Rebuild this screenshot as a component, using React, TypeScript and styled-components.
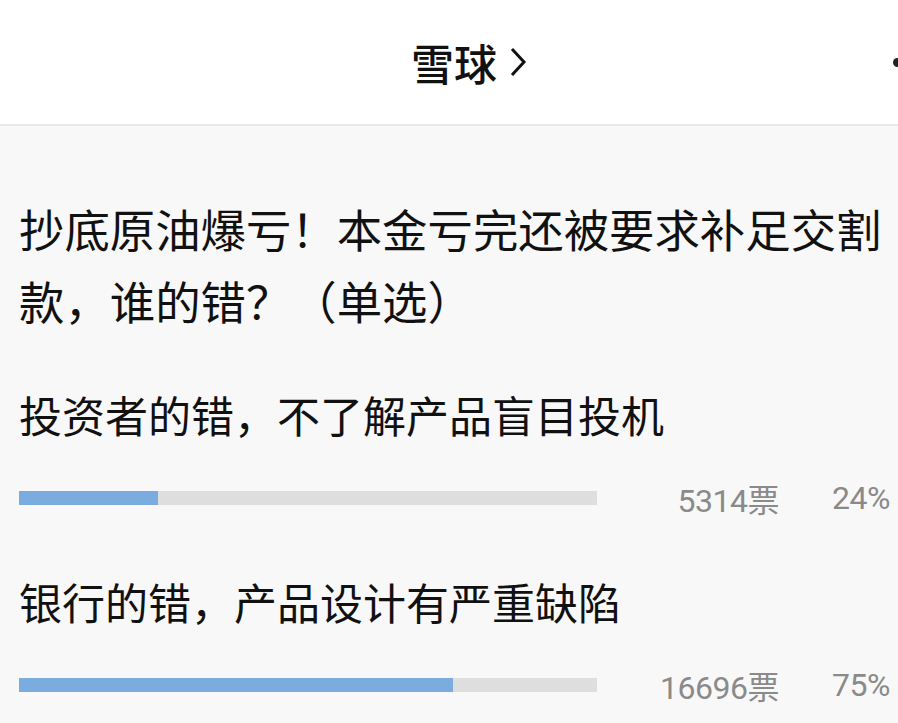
import React from 'react';
import styled, { createGlobalStyle } from 'styled-components';

const OPTIONS = [
  { label: '投资者的错，不了解产品盲目投机', votes: 5314, percent: 24 },
  { label: '银行的错，产品设计有严重缺陷', votes: 16696, percent: 75 },
];

const GlobalStyle = createGlobalStyle`
  html, body {
    margin: 0;
    padding: 0;
    background: #f8f8f8;
  }
  body {
    font-family: 'Noto Sans CJK SC', 'Noto Sans', sans-serif;
    color: #111;
    overflow: hidden;
  }
`;

export default function App() {
  return (
    <>
      <GlobalStyle />
      <Page>
        <Header>
          <HeaderTitle>
            雪球
            <svg width="18" height="32" viewBox="0 0 18 32">
              <polyline points="3,3 15,16 3,29" fill="none" stroke="#111" strokeWidth="3" />
            </svg>
          </HeaderTitle>
          <MoreDot />
        </Header>
        <Body>
          <Question>抄底原油爆亏！本金亏完还被要求补足交割款，谁的错？（单选）</Question>
          {OPTIONS.map((opt) => (
            <Option key={opt.label}>
              <OptionLabel>{opt.label}</OptionLabel>
              <ResultRow>
                <Track>
                  <Fill style={{ width: `${opt.percent}%` }} />
                </Track>
                <Votes>{opt.votes}票</Votes>
                <Percent>{opt.percent}%</Percent>
              </ResultRow>
            </Option>
          ))}
        </Body>
      </Page>
    </>
  );
}

const Page = styled.div`
  width: 898px;
  min-height: 723px;
  background: #f8f8f8;
`;

const Header = styled.header`
  position: relative;
  height: 126px;
  background: #fff;
  border-bottom: 2px solid #e8e8e8;
  display: flex;
  align-items: center;
  justify-content: center;
  padding-left: 40px;
  box-sizing: border-box;
`;

const HeaderTitle = styled.h1`
  margin: 0;
  display: flex;
  align-items: center;
  gap: 12px;
  font-size: 43px;
  font-weight: 500;
  line-height: 1;
  color: #111;
`;

const MoreDot = styled.span`
  position: absolute;
  right: -4px;
  top: 58px;
  width: 9px;
  height: 9px;
  border-radius: 50%;
  background: #222;
`;

const Body = styled.main`
  padding: 66px 8px 0 19px;
`;

const Question = styled.h2`
  margin: 0;
  font-size: 45.4px;
  font-weight: 400;
  line-height: 72px;
  color: #111;
`;

const Option = styled.section`
  margin-top: 48px;
`;

const OptionLabel = styled.div`
  font-size: 43px;
  line-height: 60px;
  color: #111;
`;

const ResultRow = styled.div`
  display: flex;
  align-items: center;
  height: 50px;
  margin-top: 29px;
`;

const Track = styled.div`
  width: 578px;
  height: 14px;
  background: #dedede;
  flex-shrink: 0;
`;

const Fill = styled.div`
  height: 100%;
  background: #7aace0;
`;

const Stat = styled.span`
  font-family: Roboto, 'Noto Sans CJK SC', sans-serif;
  font-size: 32px;
  letter-spacing: -0.5px;
  color: #8a8a8a;
  text-align: right;
  white-space: nowrap;
`;

const Votes = styled(Stat)`
  flex: 1;
`;

const Percent = styled(Stat)`
  width: 111px;
`;
